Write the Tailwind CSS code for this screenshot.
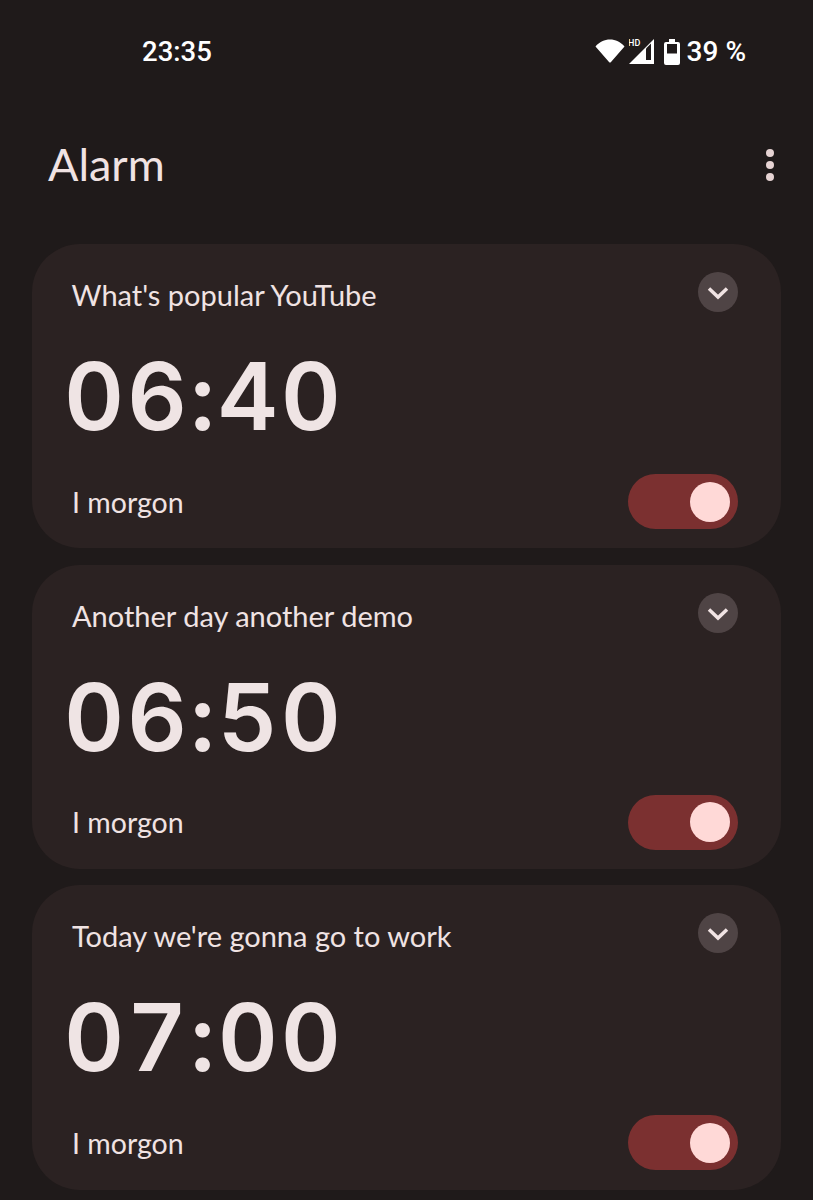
<!DOCTYPE html>
<html lang="en">
<head>
    <meta charset="UTF-8">
    <meta name="viewport" content="width=device-width, initial-scale=1.0">
    <title>Alarm</title>
    <script src="https://cdn.jsdelivr.net/npm/@tailwindcss/browser@4"></script>
</head>
<body class="bg-[#1f1a1a] font-['Lato','Liberation_Sans',sans-serif] overflow-hidden">
    <div class="w-[813px] h-[1200px] overflow-hidden">
        <!-- Status bar -->
        <div class="h-[104px] pl-[142px] pr-[67px] flex items-start justify-between text-white">
            <span class="mt-[35px] text-[27.500px] leading-[34px] font-medium font-['Roboto',sans-serif]">23:35</span>
            <div class="mt-[39px] flex items-start">
                <svg class="w-[30px] h-[24px]" viewBox="0 0 30 24" fill="#fff"><path d="M.5 7.500C4.500 2.800 9.500 .5 15 .5s10.500 2.300 14.500 7L16 23a1.300 1.300 0 0 1-2 0z"/></svg>
                <svg class="w-[26px] h-[26px] ml-[4px]" viewBox="0 0 26 26"><path d="M25 0v25H0z" fill="#fff"/><path d="M17 21h5V4.500l-5 5z" fill="#1f1a1a"/><text x="-1" y="7" font-size="9" font-weight="500" fill="#fff" font-family="Roboto, sans-serif">HD</text></svg>
                <svg class="w-[16px] h-[26px] ml-[9px]" viewBox="0 0 16 26"><path d="M5 3V0h6v3h3a2 2 0 0 1 2 2v19a2 2 0 0 1-2 2H2a2 2 0 0 1-2-2V5a2 2 0 0 1 2-2z" fill="#fff"/><rect x="3" y="5" width="10" height="9.500" fill="#1f1a1a"/></svg>
                <span class="ml-[7px] -mt-[4px] text-[28px] leading-[34px] font-medium font-['Roboto',sans-serif]">39 %</span>
            </div>
        </div>
        <!-- Header -->
        <div class="h-[140px] pl-[48px] pr-[39px] flex justify-between items-start">
            <h1 class="mt-[33px] text-[45px] leading-[54px] text-[#f0e3e3]">Alarm</h1>
            <div class="mt-[45px] flex flex-col gap-[4px]">
                <span class="w-[8px] h-[8px] rounded-full bg-[#e6d3d3]"></span>
                <span class="w-[8px] h-[8px] rounded-full bg-[#e6d3d3]"></span>
                <span class="w-[8px] h-[8px] rounded-full bg-[#e6d3d3]"></span>
            </div>
        </div>
        <!-- Alarm cards -->
        <div class="mx-[32px] w-[749px] flex flex-col gap-[16.500px]">
            <div class="h-[304px] rounded-[48px] bg-[#2b2222] pl-[40px] pr-[43px] flex flex-col text-[#f0e3e3]">
                <div class="flex justify-between items-start">
                    <span class="mt-[32px] -ml-[0.5px] text-[29px] leading-[38px]">What's popular YouTube</span>
                    <span class="mt-[28px] w-[40px] h-[40px] rounded-full bg-[#4f4445] flex items-center justify-center">
                        <svg class="w-[24px] h-[24px]" viewBox="0 0 24 24" fill="none" stroke="#f0e3e3" stroke-width="3.500"><path d="M3 8.500l9 8.500 9-8.500"/></svg>
                    </span>
                </div>
                <div class="-ml-[8px] mt-[27px] text-[93px] tracking-[2.800px] tabular-nums leading-[110px] font-semibold font-['Inter',sans-serif] text-[#efe4e4]">06:40</div>
                <div class="mt-[23px] flex justify-between items-center">
                    <span class="text-[28.500px] leading-[38px]">I morgon</span>
                    <span class="w-[110px] h-[55px] rounded-full bg-[#7b3030] flex items-center justify-end pr-[8px]"><span class="w-[40px] h-[40px] rounded-full bg-[#ffd9d7]"></span></span>
                </div>
            </div>
            <div class="h-[304px] rounded-[48px] bg-[#2b2222] pl-[40px] pr-[43px] flex flex-col text-[#f0e3e3]">
                <div class="flex justify-between items-start">
                    <span class="mt-[32px] text-[29px] leading-[38px]">Another day another demo</span>
                    <span class="mt-[28px] w-[40px] h-[40px] rounded-full bg-[#4f4445] flex items-center justify-center">
                        <svg class="w-[24px] h-[24px]" viewBox="0 0 24 24" fill="none" stroke="#f0e3e3" stroke-width="3.500"><path d="M3 8.500l9 8.500 9-8.500"/></svg>
                    </span>
                </div>
                <div class="-ml-[8px] mt-[27px] text-[93px] tracking-[2.800px] tabular-nums leading-[110px] font-semibold font-['Inter',sans-serif] text-[#efe4e4]">06:50</div>
                <div class="mt-[23px] flex justify-between items-center">
                    <span class="text-[28.500px] leading-[38px]">I morgon</span>
                    <span class="w-[110px] h-[55px] rounded-full bg-[#7b3030] flex items-center justify-end pr-[8px]"><span class="w-[40px] h-[40px] rounded-full bg-[#ffd9d7]"></span></span>
                </div>
            </div>
            <div class="h-[305px] rounded-[48px] bg-[#2b2222] pl-[40px] pr-[43px] flex flex-col text-[#f0e3e3]">
                <div class="flex justify-between items-start">
                    <span class="mt-[32px] text-[29px] leading-[38px]">Today we're gonna go to work</span>
                    <span class="mt-[28px] w-[40px] h-[40px] rounded-full bg-[#4f4445] flex items-center justify-center">
                        <svg class="w-[24px] h-[24px]" viewBox="0 0 24 24" fill="none" stroke="#f0e3e3" stroke-width="3.500"><path d="M3 8.500l9 8.500 9-8.500"/></svg>
                    </span>
                </div>
                <div class="-ml-[8px] mt-[27px] text-[93px] tracking-[2.800px] tabular-nums leading-[110px] font-semibold font-['Inter',sans-serif] text-[#efe4e4]">07:00</div>
                <div class="mt-[23px] flex justify-between items-center">
                    <span class="text-[28.500px] leading-[38px]">I morgon</span>
                    <span class="w-[110px] h-[55px] rounded-full bg-[#7b3030] flex items-center justify-end pr-[8px]"><span class="w-[40px] h-[40px] rounded-full bg-[#ffd9d7]"></span></span>
                </div>
            </div>
        </div>
    </div>
</body>
</html>
